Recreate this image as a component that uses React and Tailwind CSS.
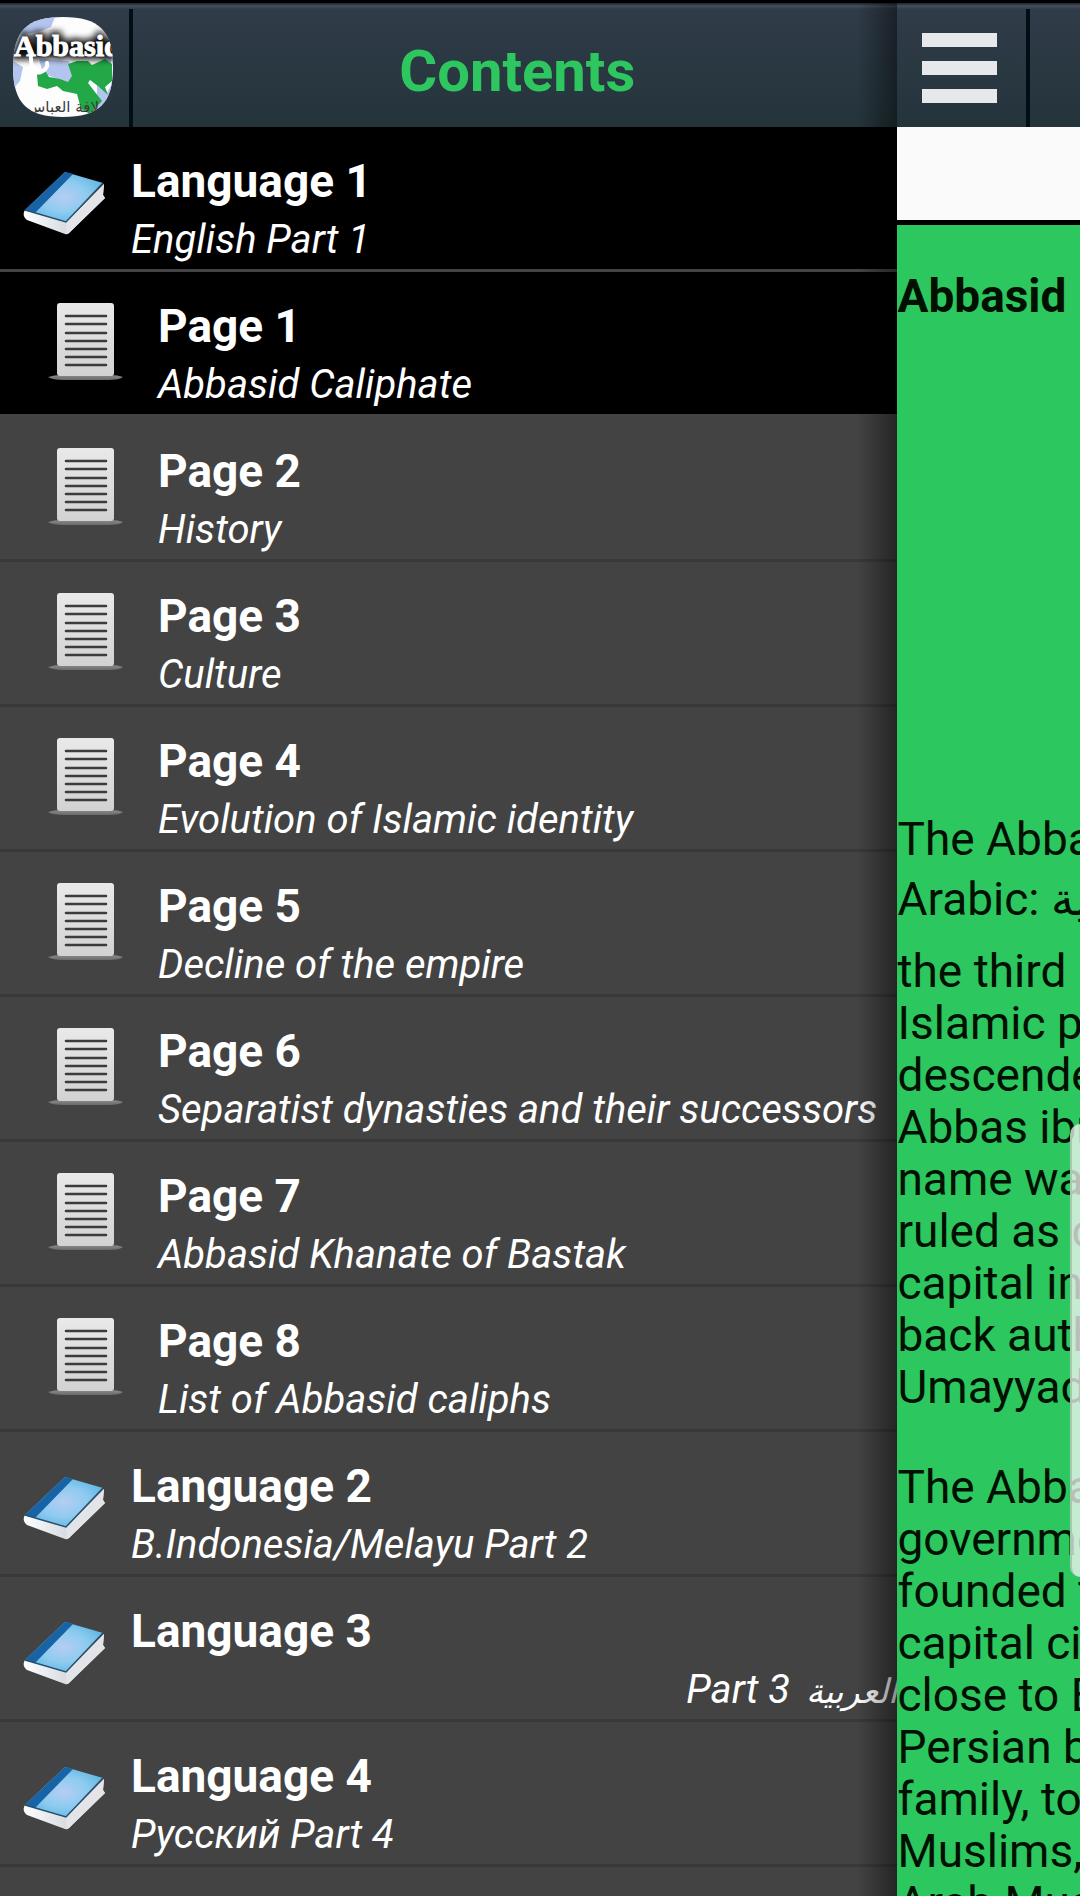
const entries = [
  { kind: "book", title: "Language 1", sub: "English Part 1", active: true },
  { kind: "page", title: "Page 1", sub: "Abbasid Caliphate", active: true },
  { kind: "page", title: "Page 2", sub: "History" },
  { kind: "page", title: "Page 3", sub: "Culture" },
  { kind: "page", title: "Page 4", sub: "Evolution of Islamic identity" },
  { kind: "page", title: "Page 5", sub: "Decline of the empire" },
  { kind: "page", title: "Page 6", sub: "Separatist dynasties and their successors" },
  { kind: "page", title: "Page 7", sub: "Abbasid Khanate of Bastak" },
  { kind: "page", title: "Page 8", sub: "List of Abbasid caliphs" },
  { kind: "book", title: "Language 2", sub: "B.Indonesia/Melayu Part 2" },
  { kind: "book", title: "Language 3", arabic: "العربية", sub: "Part 3" },
  { kind: "book", title: "Language 4", sub: "Русский Part 4" },
];

const paragraphOne = [
  "the third",
  "Islamic prophet",
  "descended from",
  "Abbas ibn",
  "name was",
  "ruled as caliphs",
  "capital in",
  "back authority",
  "Umayyad",
];

const paragraphTwo = [
  "The Abbasid",
  "government",
  "founded the",
  "capital city",
  "close to B",
  "Persian bureau",
  "family, to",
  "Muslims,",
  "Arab Muslim",
];

function BookIcon() {
  return (
    <svg viewBox="0 0 90 72" className="h-[72px] w-[90px]" aria-hidden="true">
      <defs>
        <radialGradient id="cover" cx="0.5" cy="0.5" r="0.6">
          <stop offset="0" stopColor="#b5cdf3" />
          <stop offset="0.5" stopColor="#8fcbf0" />
          <stop offset="1" stopColor="#57b4e2" />
        </radialGradient>
        <linearGradient id="sheets" x1="0" y1="0" x2="1" y2="0">
          <stop offset="0" stopColor="#ffffff" />
          <stop offset="0.5" stopColor="#d9dde2" />
          <stop offset="1" stopColor="#f6f7f8" />
        </linearGradient>
      </defs>
      <path d="M5 43C3 46 3 50 7 53L45 67Q47 68 49 66L85 31L83 28L84 17L46 55Z" fill="url(#sheets)" />
      <path d="M46 56L47 67L49 66L85 31L83 28L84 17Z" fill="#e3e4e8" />
      <path d="M45 5L83 16L46 55L5 43Z" fill="url(#cover)" />
      <path d="M45 5L53 7L15 46L5 43Z" fill="#1763a5" />
      <path d="M5 43L46 55L83 16" fill="none" stroke="#27506e" strokeWidth="1.5" />
    </svg>
  );
}

function PageIcon() {
  return (
    <svg viewBox="0 0 80 84" className="h-[84px] w-20" aria-hidden="true">
      <defs>
        <linearGradient id="paper" x1="0" y1="0" x2="0" y2="1">
          <stop offset="0" stopColor="#e9e9e9" />
          <stop offset="1" stopColor="#d2d2d2" />
        </linearGradient>
        <linearGradient id="ground" x1="0" y1="0" x2="0" y2="1">
          <stop offset="0" stopColor="#8c8c8c" />
          <stop offset="1" stopColor="#6a6a6a" />
        </linearGradient>
      </defs>
      <path d="M2 77Q8 75 16 75H64Q72 75 77 77Q74 80 62 80H18Q6 80 2 77Z" fill="url(#ground)" />
      <rect x="11" y="3" width="57" height="73" rx="3" fill="url(#paper)" />
      <path d="M20 16H60M20 24H60M20 33H60M20 41H60M20 49H60M20 57H60M20 65H60" stroke="#3e3a3d" strokeWidth="2.6" strokeLinecap="round" />
    </svg>
  );
}

function Logo() {
  return (
    <svg viewBox="0 0 100 100" className="size-[100px]" role="img" aria-label="Abbasid">
      <defs>
        <clipPath id="badge">
          <path d="M50 0C86 0 100 14 100 50S86 100 50 100S0 86 0 50S14 0 50 0Z" />
        </clipPath>
        <filter id="soft" x="-20%" y="-40%" width="140%" height="180%">
          <feGaussianBlur stdDeviation="3" />
        </filter>
      </defs>
      <g clipPath="url(#badge)">
        <rect width="100" height="100" fill="#fcfdfc" />
        <path d="M0 0H42L38 10L28 14L0 20ZM0 44L10 50L7 64L0 72ZM26 42L56 44L60 60L55 66L44 62L30 56ZM84 68L94 76L99 66V90L84 96ZM84 40L98 40V48L92 44Z" fill="#b3c4ee" />
        <path d="M24 58L31 52L36 60L47 62L55 65L59 59L55 47L64 44L75 44L79 48L92 42L99 47V64L92 70L95 78L85 69L77 63L75 66L89 84L77 97L68 92L64 77L50 74L44 69L34 72L25 69Z" fill="#22a847" />
        <g fontFamily="'Liberation Serif', serif" fontWeight="700" fontSize="30">
          <text x="1" y="39" fill="#111" stroke="#111" strokeWidth="7" filter="url(#soft)">Abbasid</text>
          <text x="1" y="39" fill="#fff" stroke="#fff" strokeWidth="1">Abbasid</text>
        </g>
        <path d="M18 36C17 50 22 57 28 55C33 53 35 49 34 46" fill="none" stroke="#fff" strokeWidth="4" strokeLinecap="round" />
        <text x="50" y="95" textAnchor="middle" fontSize="15" fill="#3a3a3a" fontFamily="'DejaVu Sans', sans-serif">لافة العباس</text>
      </g>
    </svg>
  );
}

function Entry({ kind, title, sub, active, arabic }) {
  const nested = kind === "page";
  return (
    <li className={active ? "border-b-[3px] border-[#444] bg-black" : "border-b-[3px] border-[#393939] bg-[#434343]"}>
      <a href="#" className="flex h-[142px] text-white">
        <span className={nested ? "w-[158px] shrink-0 pt-7 pl-[46px]" : "w-[131px] shrink-0 pt-10 pl-5"}>
          {nested ? <PageIcon /> : <BookIcon />}
        </span>
        <span className="flex min-w-0 flex-1 flex-col pt-[27px] whitespace-nowrap">
          <span className="text-[46px] leading-[54px] font-bold">{title}</span>
          <span dir={arabic ? "rtl" : "ltr"} className="text-[40px] leading-[64px] italic">
            {arabic && <span className="ml-2 text-[34px]">{arabic} </span>}
            {sub}
          </span>
        </span>
      </a>
    </li>
  );
}

const bar =
  "flex h-[127px] shrink-0 border-t-[3px] border-black bg-[linear-gradient(to_bottom,#1c242c_0px,#44505d_3px,#303c49_6px,#24343b_100%)]";

export default function App() {
  return (
    <div className="flex h-screen overflow-hidden bg-black font-[Roboto,'Noto_Sans',sans-serif]">
      <nav aria-label="Contents" className="relative flex w-[83.1%] shrink-0 flex-col overflow-hidden bg-[#434343]">
        <header className={bar}>
          <div className="mt-1.5 w-[133px] shrink-0 border-r-4 border-[#020e16] pt-2 pl-[13px]">
            <Logo />
          </div>
          <h1 className="flex-1 pt-[37px] pl-1 text-center text-[58px] leading-[62px] font-bold text-[#2ec75f]">Contents</h1>
        </header>
        <ul className="shrink-0">
          {entries.map((e) => (
            <Entry key={e.title} {...e} />
          ))}
        </ul>
        <div className="pointer-events-none absolute inset-y-0 right-0 w-10 bg-linear-to-r from-transparent to-black/45" />
      </nav>
      <main className="relative flex min-w-0 flex-1 flex-col overflow-hidden bg-[#2cc75e] whitespace-nowrap text-[#021002]">
        <header className={bar}>
          <button type="button" aria-label="Menu" className="mt-1.5 flex w-[133px] shrink-0 flex-col gap-[14px] border-r-4 border-[#020e16] pt-6 pl-[25px]">
            <span className="h-[14px] w-[75px] bg-[#e6e8ec]" />
            <span className="h-[14px] w-[75px] bg-[#e6e8ec]" />
            <span className="h-[14px] w-[75px] bg-[#e6e8ec]" />
          </button>
        </header>
        <div className="h-[98px] shrink-0 border-b-[5px] border-black bg-[#fafafa]" />
        <h2 className="mt-[45px] text-[46px] leading-[52px] font-bold">Abbasid</h2>
        <div className="mt-[491px] text-[46px] leading-[52px]">
          <p>The Abbasid</p>
          <p className="mt-2">Arabic: الخلافة العباسية</p>
          <p className="mt-5">
            {paragraphOne.map((line) => (
              <span key={line} className="block">{line}</span>
            ))}
          </p>
          <p className="mt-12">
            {paragraphTwo.map((line) => (
              <span key={line} className="block">{line}</span>
            ))}
          </p>
        </div>
        <div className="absolute top-[1124px] right-0 h-[453px] w-[10px] rounded-l-[10px] border-l-2 border-[#a5c9ae] bg-[#f8f8f8]/75" />
      </main>
    </div>
  );
}
